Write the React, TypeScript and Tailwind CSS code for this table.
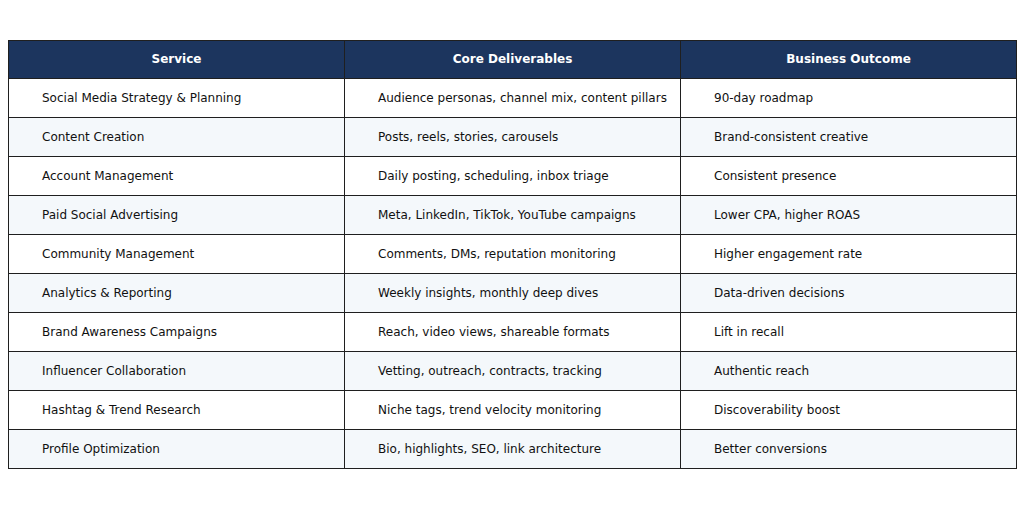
const rows: [string, string, string][] = [
    ["Social Media Strategy & Planning", "Audience personas, channel mix, content pillars", "90-day roadmap"],
    ["Content Creation", "Posts, reels, stories, carousels", "Brand-consistent creative"],
    ["Account Management", "Daily posting, scheduling, inbox triage", "Consistent presence"],
    ["Paid Social Advertising", "Meta, LinkedIn, TikTok, YouTube campaigns", "Lower CPA, higher ROAS"],
    ["Community Management", "Comments, DMs, reputation monitoring", "Higher engagement rate"],
    ["Analytics & Reporting", "Weekly insights, monthly deep dives", "Data-driven decisions"],
    ["Brand Awareness Campaigns", "Reach, video views, shareable formats", "Lift in recall"],
    ["Influencer Collaboration", "Vetting, outreach, contracts, tracking", "Authentic reach"],
    ["Hashtag & Trend Research", "Niche tags, trend velocity monitoring", "Discoverability boost"],
    ["Profile Optimization", "Bio, highlights, SEO, link architecture", "Better conversions"],
];

const headers = ["Service", "Core Deliverables", "Business Outcome"];

const App = () => {
    return (
        <div className="w-[1024px] h-[508px] bg-white pt-[40px] pl-[8px] font-['DejaVu_Sans',sans-serif]">
            <table className="w-[1008px] border-collapse table-fixed">
                <thead>
                    <tr className="h-[38px] bg-[#1c355e]">
                        {headers.map((h) => (
                            <th
                                key={h}
                                className="w-[336px] border border-[#1f1f1f] pb-[2px] text-white text-[12px] font-bold text-center"
                            >
                                {h}
                            </th>
                        ))}
                    </tr>
                </thead>
                <tbody>
                    {rows.map((row, i) => (
                        <tr
                            key={row[0]}
                            className={`h-[39px] ${i % 2 === 1 ? "bg-[#f4f8fb]" : "bg-white"}`}
                        >
                            {row.map((cell, j) => (
                                <td
                                    key={j}
                                    className="border border-[#1f1f1f] pl-[33px] text-[12px] text-[#111111]"
                                >
                                    {cell}
                                </td>
                            ))}
                        </tr>
                    ))}
                </tbody>
            </table>
        </div>
    );
};

export default App;
